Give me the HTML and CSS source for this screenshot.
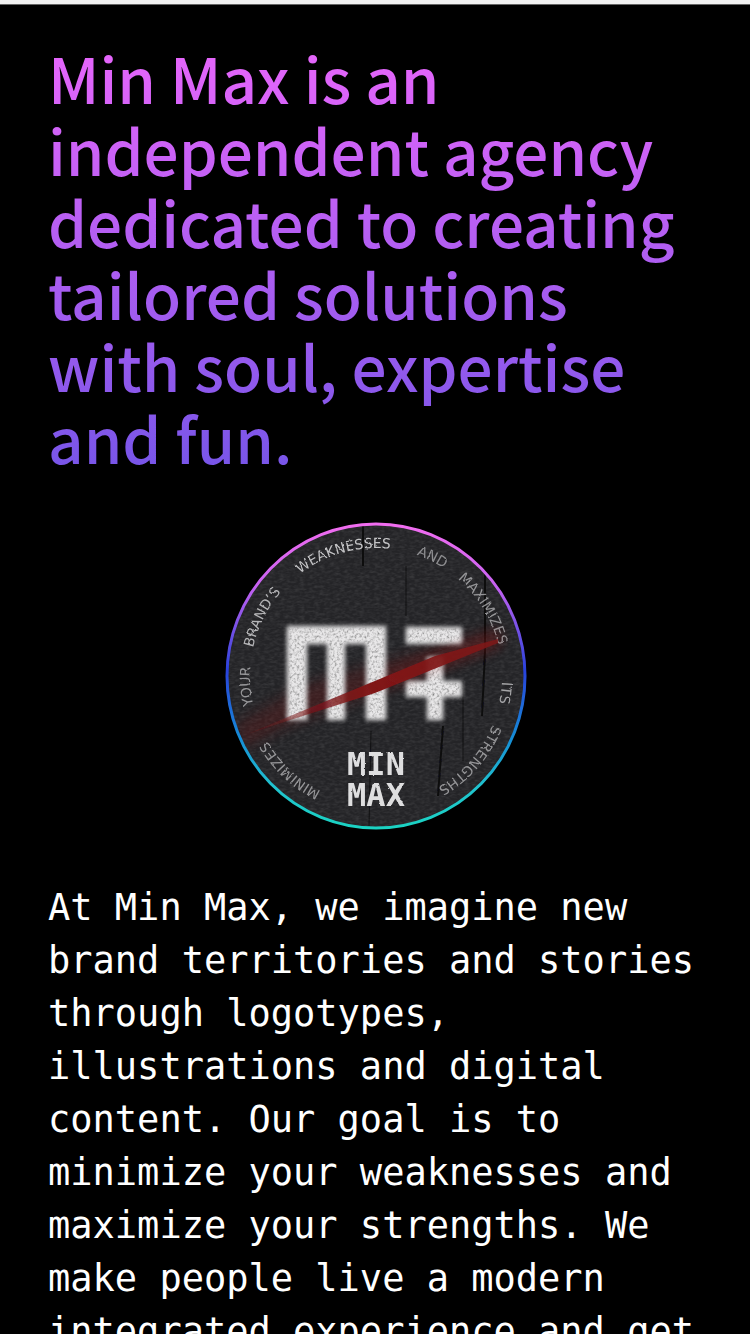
FILE: index.html
```html
<!DOCTYPE html>
<html lang="en">
<head>
<meta charset="utf-8">
<meta name="viewport" content="width=device-width, initial-scale=1">
<title>Min Max</title>
<link rel="stylesheet" href="styles.css">
</head>
<body>
<main class="about">
  <h1 class="headline">Min Max is an<br>independent agency<br>dedicated to creating<br>tailored solutions<br>with soul, expertise<br>and fun.</h1>
  <svg class="badge" viewBox="0 0 302 310" role="img" aria-label="Min Max badge">
    <defs>
      <linearGradient id="ring" x1="0" y1="0" x2="0" y2="1">
        <stop offset="0" stop-color="#f26df0"/>
        <stop offset=".2" stop-color="#c862f2"/>
        <stop offset=".48" stop-color="#2942dc"/>
        <stop offset=".7" stop-color="#168bd6"/>
        <stop offset=".86" stop-color="#20c2cf"/>
        <stop offset="1" stop-color="#1bd3c3"/>
      </linearGradient>
      <linearGradient id="slash" gradientUnits="userSpaceOnUse" x1="20" y1="212" x2="273" y2="118">
        <stop offset="0" stop-color="#7d1518" stop-opacity=".1"/>
        <stop offset=".28" stop-color="#7d1518" stop-opacity=".7"/>
        <stop offset=".5" stop-color="#801619"/>
        <stop offset="1" stop-color="#7d1518" stop-opacity=".85"/>
      </linearGradient>
      <filter id="fabric" x="0" y="0" width="1" height="1">
        <feTurbulence type="fractalNoise" baseFrequency=".2 .4" numOctaves="2" seed="4"/>
        <feColorMatrix values="0 0 0 0 1  0 0 0 0 1  0 0 0 0 1  .5 0 0 0 -.18"/>
        <feComposite in2="SourceGraphic" operator="in"/>
      </filter>
      <filter id="chalk" x="-.1" y="-.1" width="1.2" height="1.2">
        <feGaussianBlur in="SourceGraphic" stdDeviation="2" result="soft"/>
        <feTurbulence type="fractalNoise" baseFrequency=".4" numOctaves="2" seed="9"/>
        <feColorMatrix values="0 0 0 0 .2  0 0 0 0 .2  0 0 0 0 .2  2 0 0 0 -.85" result="grain"/>
        <feComposite in="grain" in2="soft" operator="in" result="specks"/>
        <feMerge><feMergeNode in="soft"/><feMergeNode in="specks"/></feMerge>
      </filter>
      <filter id="worn" x="-.1" y="-.1" width="1.2" height="1.2">
        <feTurbulence type="fractalNoise" baseFrequency=".3" numOctaves="2" seed="2"/>
        <feDisplacementMap in="SourceGraphic" scale="2" xChannelSelector="R" yChannelSelector="G"/>
        <feGaussianBlur stdDeviation=".6"/>
      </filter>
      <filter id="haze" x="-.2" y="-.4" width="1.4" height="1.8"><feGaussianBlur stdDeviation="7"/></filter>
      <filter id="edge"><feGaussianBlur stdDeviation=".7"/></filter>
      <clipPath id="disc"><ellipse cx="151" cy="155" rx="149" ry="152"/></clipPath>
      <path id="orbit" d="M151 283A126 128 0 0 1 151 27A126 128 0 0 1 151 283"/>
    </defs>
    <ellipse cx="151" cy="155" rx="149" ry="152" fill="#242427"/>
    <ellipse cx="151" cy="155" rx="149" ry="152" fill="#fff" opacity=".35" filter="url(#fabric)"/>
    <g clip-path="url(#disc)">
      <g fill="none" stroke="#0b0b0e" filter="url(#edge)">
        <path d="M138 2V45" stroke-width="2"/>
        <path d="M260 45V130L257 195" stroke-width="2"/>
        <path d="M218 205L213 275" stroke-width="2"/>
        <path d="M238 160V240M146 210L144 305M181 45V95" stroke-width="1" opacity=".6"/>
      </g>
      <path class="haze" d="M10 205L80 165L275 108V125L60 205L15 228Z" filter="url(#haze)"/>
    </g>
    <g class="orbit-text" filter="url(#worn)">
      <text opacity=".7"><textPath href="#orbit" startOffset="57">MINIMIZES</textPath></text>
      <text opacity=".7"><textPath href="#orbit" startOffset="170">YOUR</textPath></text>
      <text opacity=".9"><textPath href="#orbit" startOffset="228">BRAND’S</textPath></text>
      <text><textPath href="#orbit" startOffset="317">WEAKNESSES</textPath></text>
      <text opacity=".65"><textPath href="#orbit" startOffset="440">AND</textPath></text>
      <text opacity=".7"><textPath href="#orbit" startOffset="488">MAXIMIZES</textPath></text>
      <text opacity=".8"><textPath href="#orbit" startOffset="604">ITS</textPath></text>
      <text opacity=".7"><textPath href="#orbit" startOffset="648">STRENGTHS</textPath></text>
    </g>
    <g fill="#e8e7e8" filter="url(#chalk)">
      <path d="M62 105H161V199H141V123H120V199H102V123H82V199H62Z"/>
      <path d="M181 106H237V123H181ZM202 136H218V160H237V176H218V199H202V176H181V160H202Z"/>
    </g>
    <path d="M273 118V122L150 172L62 200L20 214L70 193L145 162L210 135Z" fill="url(#slash)" filter="url(#edge)"/>
    <path d="M165 154L273 112V122L160 164Z" fill="#8a1719" opacity=".4" filter="url(#haze)"/>
    <g class="name" filter="url(#worn)">
      <text x="151" y="254">MIN</text>
      <text x="151" y="285">MAX</text>
    </g>
    <ellipse cx="151" cy="155" rx="149" ry="152" fill="none" stroke="url(#ring)" stroke-width="3"/>
  </svg>
  <p class="intro">At Min Max, we imagine new<br>brand territories and stories<br>through logotypes,<br>illustrations and digital<br>content. Our goal is to<br>minimize your weaknesses and<br>maximize your strengths. We<br>make people live a modern<br>integrated experience and get</p>
</main>
</body>
</html>
```
FILE: styles.css
```css
html {
  background: #000;
}

body {
  margin: 0;
  height: 100vh;
  overflow: hidden;
  box-sizing: border-box;
  border-top: 4px solid #f2f2f2;
  background: #000;
  color: #fff;
}

.about {
  display: flex;
  flex-direction: column;
  padding: 36px 24px 0 48px;
  border-top: 1px solid #666;
}

.headline {
  margin: 0;
  font: 500 62px/72px "Noto Sans CJK JP", sans-serif;
  white-space: nowrap;
  color: transparent;
  background: linear-gradient(#e866fb, #7755e8);
  -webkit-background-clip: text;
  background-clip: text;
}

.badge {
  width: 302px;
  height: 310px;
  margin: 48px 22px 50px 0;
  align-self: center;
}

.haze {
  fill: #6b1517;
  opacity: 0.35;
}

.orbit-text {
  font: 14px "DejaVu Sans", sans-serif;
  fill: #c4c4c6;
}

.name {
  font: bold 32px "DejaVu Sans Mono", monospace;
  fill: #dededf;
  text-anchor: middle;
}

.intro {
  margin: 0;
  font: 37px/53px "DejaVu Sans Mono", monospace;
  white-space: nowrap;
}
```
